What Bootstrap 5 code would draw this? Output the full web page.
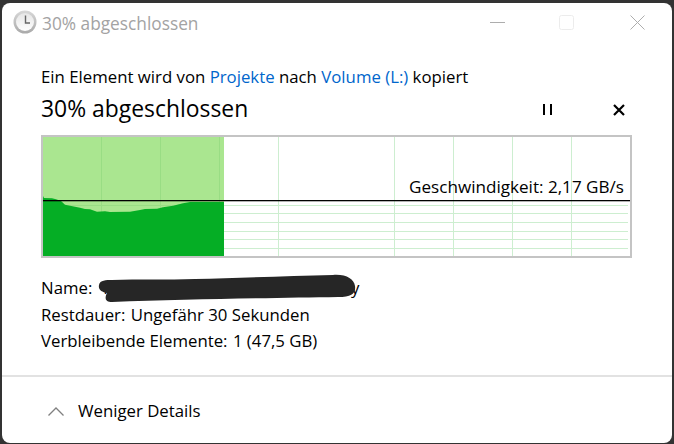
<!DOCTYPE html>
<html lang="de">

<head>
    <meta charset="UTF-8" />
    <meta name="viewport" content="width=device-width, initial-scale=1" />
    <title>30% abgeschlossen</title>
    <link href="https://cdn.jsdelivr.net/npm/bootstrap@5.3.2/dist/css/bootstrap.min.css" rel="stylesheet" />
    <style>
        html, body { height: 100%; }
        body { background: #333; overflow: hidden; font-family: "Open Sans", "Liberation Sans", sans-serif; font-size: 16.8px; color: #000; }
        .fenster { width: 670px; height: 440px; margin: 3px 0 0 2px; border-radius: 8px; background: #fff; }
        .titelzeile { height: 42px; padding: 7px 0 0 11px; }
        .titel-links { height: 28px; }
        .uhr { margin-top: -5px; }
        .titel-text { font-size: 17.3px; color: #a3a3a3; margin-left: 5px; }
        .fenster-btns { height: 25px; padding-right: 27px; }
        .fenster-btns svg + svg { margin-left: 54px; }
        .fenster-btns svg:last-child { margin-left: 56px; }
        .kopf { padding: 22px 39px 0 39px; line-height: 20px; }
        .blau { color: #0066cc; }
        .gross { font-size: 22.9px; line-height: 30px; margin-top: 7px; }
        .steuer { gap: 60px; padding: 8px 8px 0 0; }
        .diagramm { position: relative; width: 591px; height: 123px; margin: 11px 0 0 39px; border: 2px solid #c4c4c4; }
        .diagramm svg { display: block; }
        .tempo { position: absolute; right: 6px; top: 40px; line-height: 20px; font-size: 17.1px; }
        .details { padding: 17px 0 0 39px; line-height: 26.5px; }
        .details .beschr { margin-right: 1px; }
        .name-zeile { position: relative; height: 26.5px; }
        .name-wert { width: 256px; margin-left: 10px; }
        .schwaerzung { position: absolute; left: 57px; top: -2px; }
        .trenner { height: 2px; background: #e2e2e2; margin-top: 20.5px; }
        .fuss { height: 66px; padding: 2px 0 0 46px; gap: 14px; }
    </style>
</head>

<body>
    <div class="fenster d-flex flex-column">
        <div class="titelzeile d-flex justify-content-between">
            <div class="titel-links d-flex align-items-center align-self-start">
                <svg class="uhr" width="24" height="24" viewBox="0 0 24 24">
                    <defs>
                        <linearGradient id="rand" x1="0" y1="0" x2="0" y2="1">
                            <stop offset="0" stop-color="#d8d8d8" />
                            <stop offset="1" stop-color="#a9a9a9" />
                        </linearGradient>
                        <linearGradient id="blatt" x1="0" y1="0" x2="0" y2="1">
                            <stop offset="0" stop-color="#e6e6e6" />
                            <stop offset="1" stop-color="#fdfdfd" />
                        </linearGradient>
                    </defs>
                    <circle cx="12" cy="12" r="11.5" fill="url(#rand)" />
                    <circle cx="12" cy="12" r="9" fill="url(#blatt)" />
                    <path d="M12.5 5.5V13H17" fill="none" stroke="#666" stroke-width="1.4" />
                </svg>
                <span class="titel-text">30% abgeschlossen</span>
            </div>
            <div class="fenster-btns d-flex align-items-center align-self-start">
                <svg width="15" height="15" viewBox="0 0 15 15"><path d="M0 7.5H15" stroke="#adadad" /></svg>
                <svg width="15" height="15" viewBox="0 0 15 15"><rect x=".5" y=".5" width="14" height="14" rx="2" fill="none" stroke="#ececec" /></svg>
                <svg width="15" height="15" viewBox="0 0 15 15"><path d="M.5.5l14 14M14.500.5l-14 14" stroke="#adadad" fill="none" /></svg>
            </div>
        </div>
        <div class="kopf">
            <div>Ein Element wird von <span class="blau">Projekte</span> nach <span class="blau">Volume (L:)</span> kopiert</div>
            <div class="d-flex justify-content-between align-items-center">
                <div class="gross">30% abgeschlossen</div>
                <div class="steuer d-flex align-items-center">
                    <svg width="11" height="11" viewBox="0 0 11 11"><path d="M2 0V11M9 0V11" stroke="#000" stroke-width="2" /></svg>
                    <svg width="12" height="12" viewBox="0 0 12 12"><path d="M1 1l10 10M11 1L1 11" stroke="#000" stroke-width="2.200" fill="none" /></svg>
                </div>
            </div>
        </div>
        <div class="diagramm">
            <svg id="graph" width="587" height="119" viewBox="43 137 587 119"></svg>
            <div class="tempo">Geschwindigkeit: 2,17 GB/s</div>
        </div>
        <div class="details">
            <div class="name-zeile d-flex">
                <span class="beschr">Name:</span>
                <span class="name-wert d-flex justify-content-between"><span>M</span><span>y</span></span>
                <svg class="schwaerzung" width="260" height="30" viewBox="0 0 260 30">
                    <path d="M1 12C2 7 8 7 14 7C40 6 70 7 97 6C140 5 190 3 235 2C248 1 256 6 257 13C258 20 254 24 240 24C180 25 90 26 14 29C8 29 6 26 9 20C4 19 0 17 1 12Z" fill="#262626" />
                </svg>
            </div>
            <div><span class="beschr">Restdauer:</span> Ungefähr 30 Sekunden</div>
            <div><span class="beschr">Verbleibende Elemente:</span> 1 (47,5 GB)</div>
        </div>
        <div class="trenner"></div>
        <div class="fuss d-flex align-items-center">
            <svg width="16" height="9" viewBox="0 0 16 9"><path d="M.5 8.500L8 1l7.500 7.500" fill="none" stroke="#808080" stroke-width="1.300" /></svg>
            <span>Weniger Details</span>
        </div>
    </div>
    <script>
        const verlauf = [[43, 196], [44, 198], [52, 198.3], [56, 199.3], [61, 201], [65, 204.7], [70, 205.7], [75, 206.7], [80, 207.7], [85, 209], [90, 209.3], [97, 211.7], [105, 211.3], [110, 212], [130, 211.7], [140, 210], [145, 209], [157, 208.7], [163, 207.3], [173, 205.7], [183, 203.3], [190, 202], [224, 202]];
        const senkrecht = [101, 160, 219, 278, 394, 453, 512, 571];
        const waagerecht = [205, 213, 222, 231, 239, 248];
        let svg = '';
        senkrecht.forEach(x => { svg += `<rect x="${x}" y="137" width="1" height="119" fill="#cdeed0"/>`; });
        waagerecht.forEach(y => { svg += `<rect x="43" y="${y}" width="585" height="1" fill="#cdeed0"/>`; });
        svg += `<rect x="43" y="137" width="181" height="119" fill="#aae690"/>`;
        [101, 160, 219].forEach(x => { svg += `<rect x="${x}" y="137" width="1" height="119" fill="#99dd84"/>`; });
        svg += `<rect x="43" y="205" width="181" height="1" fill="#99dd84"/>`;
        svg += `<polygon points="${verlauf.map(p => p.join(',')).join(' ')} 224,256 43,256" fill="#05ae25"/>`;
        svg += `<rect x="43" y="200" width="587" height="1.300" fill="#000"/>`;
        document.getElementById('graph').innerHTML = svg;
    </script>
    <script src="https://cdn.jsdelivr.net/npm/bootstrap@5.3.2/dist/js/bootstrap.bundle.min.js"></script>
</body>

</html>
